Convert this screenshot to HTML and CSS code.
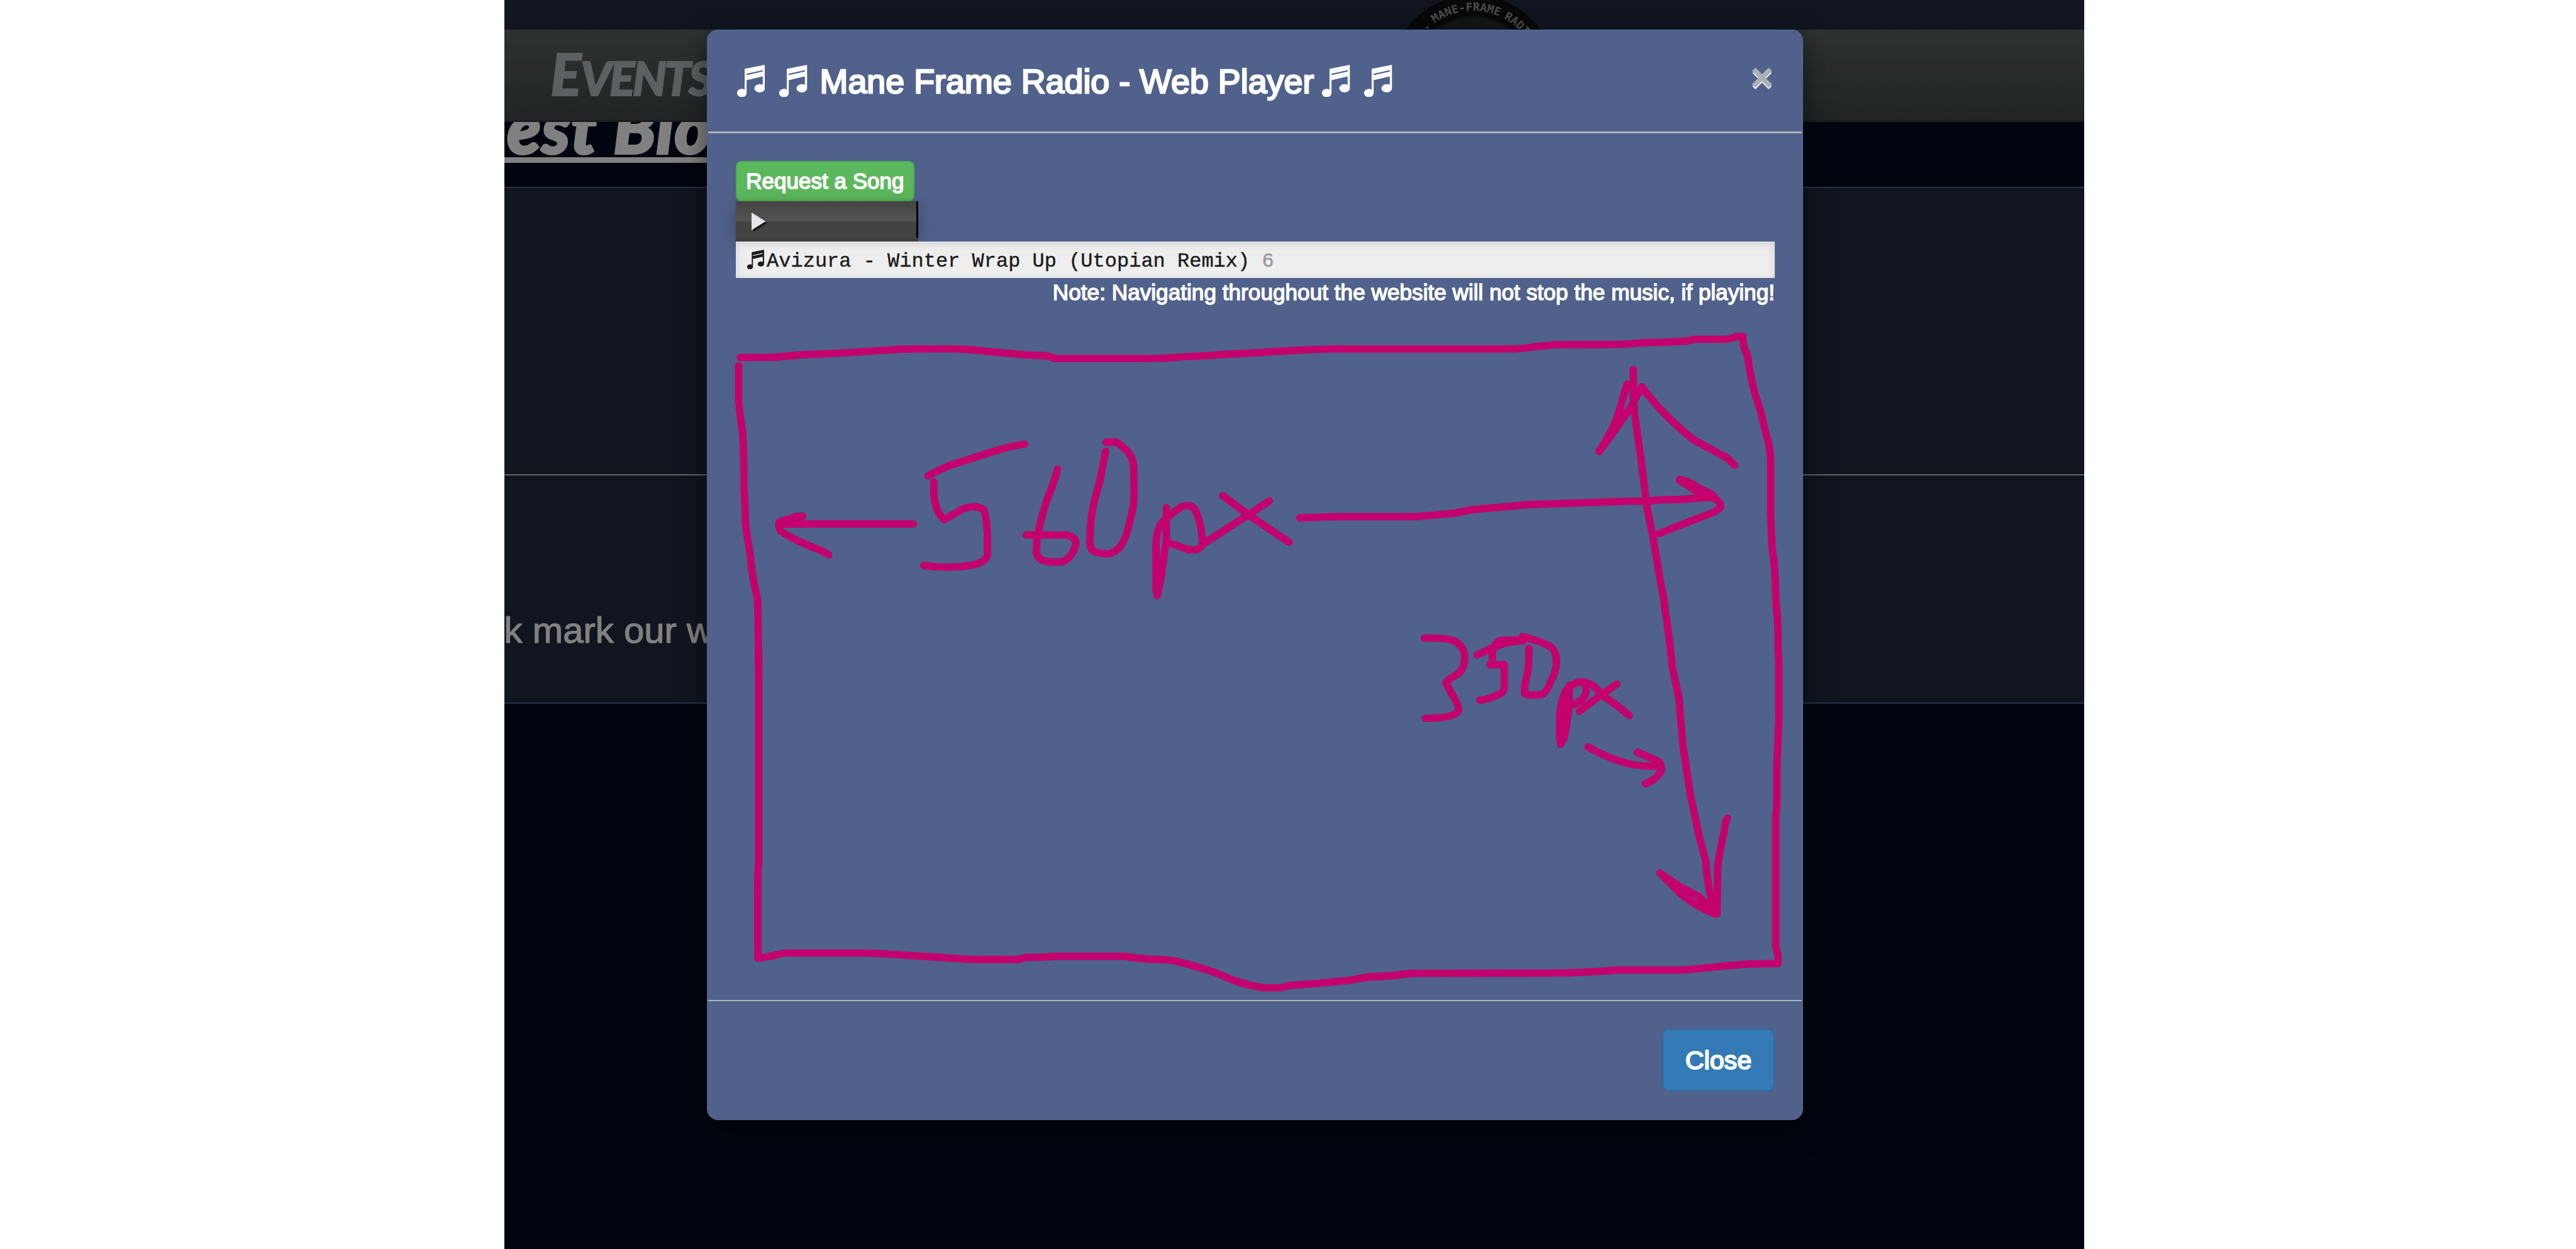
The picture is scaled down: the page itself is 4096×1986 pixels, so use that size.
FILE: index.html
```html
<!DOCTYPE html>
<html lang="en">
<head>
<meta charset="utf-8">
<title>Mane Frame Radio - Web Player</title>
<link rel="stylesheet" href="styles.css">
</head>
<body>
<svg class="defs" aria-hidden="true">
  <symbol id="notes" viewBox="0 0 56 64">
    <path fill="currentColor" fill-rule="evenodd" d="M15 8 55.500 0V46.500A10.500 8.200 0 1 1 51 40V23L19 30.500V56A9.600 8.300 0 1 1 15 49.500ZM19 17.700V20.500L51 13.300V10.700Z"/>
  </symbol>
</svg>

<div class="page">
  <header class="banner">
    <svg class="logo" viewBox="2760 0 340 59">
      <circle cx="2928" cy="154" r="164" fill="#070808"/>
      <circle cx="2928" cy="154" r="121" fill="#131716" stroke="#0d0f0f" stroke-width="4"/>
      <path id="rim" d="M2812 90A132 132 0 0 1 3057 127" fill="none"/>
      <text class="rim-text"><textPath href="#rim" startOffset="13">O . MANE-FRAME RADIO</textPath></text>
    </svg>
  </header>
  <nav class="navbar"><a class="nav-link"><span class="nav-cap">E</span>VENTS</a></nav>
  <div class="blog-head"><h1 class="blog-title">est Blo</h1></div>
  <section class="panel"></section>
  <section class="panel panel-text"><p>k mark our w</p></section>

  <div class="modal">
    <div class="modal-header">
      <h4 class="modal-title">
        <svg class="note"><use href="#notes"/></svg>
        <svg class="note"><use href="#notes"/></svg>
        <span class="title-text">Mane Frame Radio - Web Player</span>
        <svg class="note"><use href="#notes"/></svg>
        <svg class="note"><use href="#notes"/></svg>
      </h4>
      <button class="close">×</button>
    </div>
    <div class="modal-body">
      <button class="btn-request">Request a Song</button>
      <div class="player">
        <svg class="play" viewBox="0 0 32 40"><path d="M4 5V38L31 21Z" fill="#151515"/><path d="M0 0V35L28 17.500Z" fill="#e6e6e8"/></svg>
        <span class="player-edge"></span>
      </div>
      <div class="song"><svg class="song-note"><use href="#notes"/></svg><span>Avizura - Winter Wrap Up (Utopian Remix) <span class="count">6</span></span></div>
      <p class="hint">Note: Navigating throughout the website will not stop the music, if playing!</p>
    </div>
    <div class="modal-footer"><button class="btn-close">Close</button></div>
  </div>
</div>

<!-- Freehand size annotations drawn over the dialog -->
<svg class="ink" viewBox="0 0 4096 1986">
  <g transform="translate(1120 512) scale(.61224 .35714)">
    <path d="M93 158L180 157Q215 152 250 146L340 140L510 121Q580 119 655 120Q690 122 740 132L830 146L885 150Q900 153 907 162L1150 162Q1210 162 1250 154Q1300 152 1340 145L1437 137"/>
    <path d="M89 195L89 350Q92 410 99 490Q103 580 103 750Q106 800 106 880Q108 930 116 1000Q121 1050 123 1105Q129 1170 138 1235Q140 1330 141 1568"/>
    <path d="M543 899L195 899M256 865L238 866Q215 880 195 890Q190 905 198 930Q225 965 285 1005Q310 1020 323 1037M250 872L200 896"/>
    <path d="M832 544Q800 550 740 582L635 640Q605 662 581 685"/>
    <path d="M596 712Q594 800 606 840Q612 865 623 880L665 838Q700 808 725 835Q732 860 735 940L735 1040Q730 1070 695 1083Q630 1099 570 1084"/>
    <path d="M917 655Q908 720 890 790Q868 910 864 970L862 1020Q862 1060 895 1068L930 1068Q955 1050 965 990Q965 955 940 948L836 948"/>
    <path d="M1042 575Q1035 640 1027 710Q1008 810 1003 900L1001 985Q1002 1020 1020 1026Q1050 1040 1065 1022Q1090 1000 1103 900Q1117 820 1116 760L1115 650Q1114 600 1095 570Q1080 545 1070 535L1043 535"/>
    <path d="M1200 827L1200 960L1187 1130L1176 1218L1173 1190L1173 990Q1174 920 1190 890Q1210 855 1240 822Q1260 810 1272 830Q1290 880 1294 985Q1288 1012 1275 1015L1255 1013Q1220 990 1200 980"/>
    <path d="M1346 773L1413 858L1500 960L1519 980M1467 797L1413 858L1294 990"/>
  </g>
  <g transform="translate(2000 512) scale(.56121 .35714)">
    <path d="M0 137Q100 124 210 120L725 120Q760 118 795 108L845 101L1030 100L1085 93Q1150 91 1210 86L1240 77L1315 77Q1340 76 1355 65Q1365 62 1374 64Q1374 105 1382 130Q1390 155 1390 180Q1398 260 1408 315L1425 400L1440 500Q1454 560 1453 650L1453 850Q1455 940 1457 1010Q1464 1060 1466 1150L1469 1270"/>
    <path d="M119 872L210 867L445 867L555 852Q590 840 615 834Q690 825 765 813L940 804L1050 798L1110 798Q1130 790 1190 791Q1230 786 1290 780"/>
    <path d="M1195 702Q1220 706 1245 735L1291 772L1245 755L1195 705L1255 750M1285 776Q1312 800 1312 820Q1308 835 1290 848L1180 915L1138 942"/>
    <path d="M1064 212L1064 350Q1070 450 1085 600L1103 830L1120 960L1140 1150L1153 1255"/>
    <path d="M1046 277L1025 390Q1015 450 985 530L967 577Q985 545 1060 370L1088 289Q1100 315 1130 370Q1175 450 1235 525L1330 605L1351 638"/>
  </g>
  <g transform="translate(2160 960) scale(.45918 .53571)">
    <path d="M1446 0Q1452 40 1453 80L1453 130L1456 180L1456 340L1449 480L1449 600Q1444 640 1445 670L1445 1015L1453 1045L1453 1068L1360 1069Q1300 1072 1235 1078L1130 1087L900 1087Q800 1094 710 1096L190 1097L90 1105Q40 1106 0 1113"/>
    <path d="M1058 0Q1075 80 1087 190L1110 280Q1118 370 1125 430L1150 570L1180 690L1203 765Q1205 800 1215 850L1228 900L1238 920"/>
    <path d="M1278 637Q1268 650 1268 670Q1250 740 1244 780L1242 920M1044 799L1110 838L1180 870L1238 922Q1150 890 1110 855L1044 799M1215 850L1242 910M1228 870L1238 915"/>
    <path d="M228 102Q320 100 340 115Q368 130 368 160Q368 190 345 208Q300 230 303 236L325 270Q350 305 346 318Q330 340 232 340"/>
    <path d="M411 152L470 128Q480 108 500 109L560 107M470 130Q510 112 570 110M464 130L464 175M455 181L505 181L505 245Q505 262 490 268Q430 290 420 286"/>
    <path d="M590 132Q592 190 583 215Q574 240 575 266Q590 275 635 269Q650 265 665 232Q685 205 686 170Q684 135 660 125Q640 115 568 97"/>
    <path d="M730 242L730 300Q720 370 712 400L700 417L697 400L697 330Q700 290 718 258Q750 230 775 232Q790 235 788 265Q780 290 740 300M718 258L705 400M775 232Q810 232 842 270L900 305L938 332M895 238L842 270L765 319"/>
    <path d="M795 425Q870 462 950 478Q1000 484 1048 482M966 441L1040 468Q1052 480 1048 497Q1030 520 1010 528L994 534"/>
  </g>
  <g transform="translate(1120 1040) scale(.71429 .5102)">
    <path d="M121 0L121 640Q118 700 119 760L119 948L150 941Q170 932 190 932L360 932Q420 935 475 941L595 952L700 952Q706 946 725 945Q750 945 780 942L935 942Q960 947 990 951L1030 953Q1060 958 1130 989Q1150 1000 1180 1018Q1210 1032 1245 1040L1285 1040Q1300 1032 1310 1032L1360 1027L1440 1016Q1470 1006 1490 1006Q1540 1002 1568 996"/>
  </g>
</svg>
</body>
</html>
```
FILE: styles.css
```css
html {
  font-size: 8px;
}

body {
  margin: 0;
  background: #fff;
  font-family: "Liberation Sans", Arial, sans-serif;
  overflow: hidden;
}

h1, h4, p {
  margin: 0;
  font-weight: 400;
}

button {
  padding: 0;
  font-family: inherit;
}

.defs {
  display: none;
}

.page {
  position: relative;
  width: 314.1rem;
  height: 248.25rem;
  margin-left: 100.2rem;
  background: #01050f;
  overflow: hidden;
}

/* Dimmed site behind the dialog */
.banner {
  height: 5.9rem;
  background: #10151f;
}

.logo {
  display: block;
  width: 34rem;
  height: 5.9rem;
  margin-left: 175.8rem;
}

.rim-text {
  font: 700 22.5px "DejaVu Sans Mono", monospace;
  fill: #4b4c4c;
  word-spacing: -4px;
}

.navbar {
  box-sizing: border-box;
  height: 18.4rem;
  padding-left: 9.2rem;
  border-bottom: .4rem solid #1b1d1d;
  background: linear-gradient(#2d3232, #202424);
}

.nav-link {
  display: block;
  font: italic 900 9.4rem/17.6rem Lato, sans-serif;
  letter-spacing: -.45rem;
  color: #5c6062;
  -webkit-text-stroke: .25rem #5c6062;
  white-space: nowrap;
}

.nav-cap {
  font-size: 11.4rem;
  letter-spacing: -.1rem;
}

.blog-head {
  height: 12.8rem;
  overflow: hidden;
}

.blog-title {
  width: 60rem;
  height: 8.1rem;
  padding-left: .6rem;
  font: italic 900 13.6rem/2rem Lato, sans-serif;
  letter-spacing: .25rem;
  color: #808080;
  -webkit-text-stroke: .5rem #808080;
  background: linear-gradient(#808080, #808080) 0 6.95rem / 100% 1.15rem no-repeat;
}

.panel {
  box-sizing: border-box;
  height: 57.1rem;
  border-top: .36rem solid #27314a;
  background: #10151f;
}

.panel-text {
  height: 45.7rem;
  padding-top: 26.6rem;
  border-top: .3rem solid #646566;
  border-bottom: .36rem solid #27314a;
  font-size: 7.26rem;
  line-height: 8.4rem;
  color: #808080;
  -webkit-text-stroke: .15rem #808080;
}

/* Dialog */
.modal {
  position: absolute;
  left: 40.3rem;
  top: 5.85rem;
  box-sizing: border-box;
  width: 217.9rem;
  height: 216.8rem;
  display: flex;
  flex-direction: column;
  border: .36rem solid #52649190;
  border-radius: 2.2rem;
  background: #50618b;
  box-shadow: 0 1.8rem 5.4rem rgba(0, 0, 0, .5);
  color: #fff;
}

.modal-header {
  box-sizing: border-box;
  display: flex;
  align-items: center;
  justify-content: space-between;
  height: 20.4rem;
  padding: 0 5.7rem 0 5.7rem;
  border-bottom: .4rem solid #aeb4b8;
}

.modal-title {
  display: flex;
  align-items: center;
  font-size: 6.73rem;
  -webkit-text-stroke: .32rem #fff;
}

.note {
  width: 5.6rem;
  height: 6.4rem;
  margin-right: 2.8rem;
  -webkit-text-stroke: 0;
}

.title-text {
  margin: .1rem 1.6rem 0 -.3rem;
  white-space: nowrap;
}

.close {
  margin-top: -1.3rem;
  border: 0;
  background: none;
  font-size: 7.6rem;
  font-weight: 700;
  line-height: 7.6rem;
  color: #a9b1b5;
  -webkit-text-stroke: .15rem #a9b1b5;
  text-shadow: 0 .36rem 0 #fff;
}

.modal-body {
  flex: 1;
  padding: 5.5rem 5.4rem 0 5.44rem;
}

.btn-request {
  display: block;
  box-sizing: border-box;
  width: 35.6rem;
  height: 8rem;
  border: .36rem solid #4cae4c;
  border-radius: 1.1rem;
  background: #5cb85c;
  font-size: 4.38rem;
  line-height: 7.1rem;
  color: #fff;
  -webkit-text-stroke: .2rem #fff;
  white-space: nowrap;
}

.player {
  display: flex;
  justify-content: space-between;
  width: 36.3rem;
  height: 8rem;
  background: linear-gradient(#444 0, #535353 50%, #434343 50%, #434343 90%, #3e3e3e 90%);
  box-shadow: 0 .7rem 3.2rem rgba(0, 0, 0, .28);
}

.play {
  width: 3.2rem;
  height: 4rem;
  margin: 2.2rem 0 0 3.2rem;
}

.player-edge {
  width: .4rem;
  height: 7.25rem;
  background: #000;
}

.song {
  position: relative;
  box-sizing: border-box;
  display: flex;
  height: 7.25rem;
  padding-left: 2.3rem;
  background: #eee;
  box-shadow: inset 0 .4rem 1.6rem rgba(0, 0, 0, .13), inset 0 0 0 .1rem #fff8;
  font-family: "Liberation Mono", "Courier New", monospace;
  font-size: 4rem;
  line-height: 8.1rem;
  color: #1b1b1b;
  -webkit-text-stroke: .05rem #1b1b1b;
  white-space: pre;
}

.song-note {
  width: 3.4rem;
  height: 3.9rem;
  margin: 1.6rem .5rem 0 0;
}

.count {
  color: #999;
  -webkit-text-stroke: .05rem #999;
}

.hint {
  padding-top: .3rem;
  font-size: 4.4rem;
  line-height: 5.2rem;
  text-align: right;
  white-space: nowrap;
  -webkit-text-stroke: .18rem #fff;
}

.modal-footer {
  box-sizing: border-box;
  display: flex;
  justify-content: flex-end;
  height: 23.6rem;
  padding: 5.5rem 5.4rem 0;
  border-top: .36rem solid #aeb4b8;
}

.btn-close {
  box-sizing: border-box;
  width: 22.4rem;
  height: 12.3rem;
  padding-top: .3rem;
  border: .36rem solid #2e6da4;
  border-radius: 1.4rem;
  background: #337ab7;
  font-size: 5.15rem;
  color: #fff;
  -webkit-text-stroke: .25rem #fff;
}

.ink {
  position: absolute;
  left: 0;
  top: 0;
  width: 4096px;
  height: 1986px;
  fill: none;
  stroke: #c4006e;
  stroke-width: 11.7px;
  stroke-linecap: round;
  stroke-linejoin: round;
}

.ink path {
  vector-effect: non-scaling-stroke;
}
```
